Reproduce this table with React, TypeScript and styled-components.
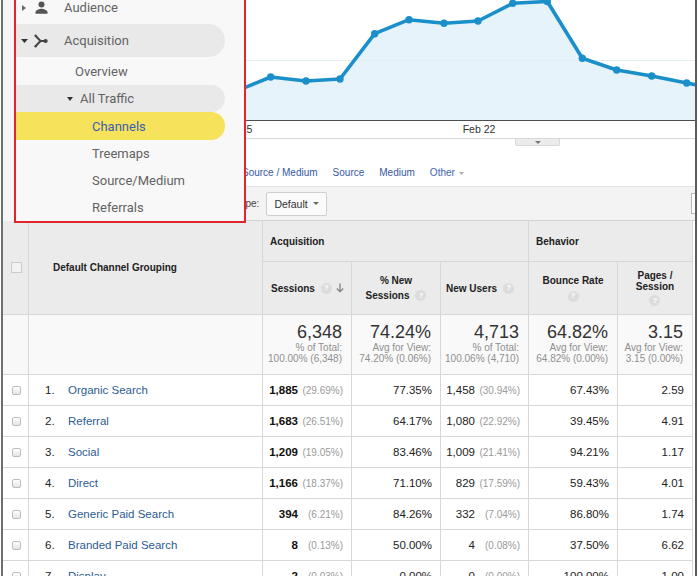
import React from "react";
import styled, { createGlobalStyle } from "styled-components";

const GlobalStyle = createGlobalStyle`
  html, body { margin: 0; padding: 0; background: #ffffff; }
  body { font-family: "Liberation Sans", Arial, sans-serif; }
  #root { width: 698px; height: 576px; overflow: hidden; }
`;

const Frame = styled.div`
  box-sizing: border-box;
  margin-left: 1px;
  width: 696px;
  height: 576px;
  border-left: 2px solid #6f6f6f;
  border-right: 2px solid #5c5c5c;
  display: flex;
  flex-direction: column;
  overflow: hidden;
  background: #fff;
`;

const Top = styled.div`
  display: flex;
  height: 221px;
  flex-shrink: 0;
`;

const SideArea = styled.div`
  width: 243px;
  flex-shrink: 0;
  padding-left: 11px;
  box-sizing: border-box;
  background: #f6f6f6;
`;

const Sidebar = styled.nav`
  position: relative;
  z-index: 2;
  box-sizing: border-box;
  width: 232px;
  height: 223px;
  border: 2px solid #e2252b;
  border-top: none;
  background: #f8f8f8;
  overflow: hidden;
  font-family: Roboto, "Noto Sans", sans-serif;
  font-size: 13px;
  color: #636363;
`;

const NavList = styled.div`
  margin-top: -6px;
  display: flex;
  flex-direction: column;
`;

type Pill = "gray" | "yellow" | undefined;

const NavItem = styled.div<{ $h: number; $indent: number; $pill?: Pill; $active?: boolean; $gap?: number }>`
  display: flex;
  align-items: center;
  height: ${(p) => p.$h}px;
  padding-left: ${(p) => p.$indent}px;
  margin-top: ${(p) => p.$gap ?? 0}px;
  width: 209px;
  box-sizing: border-box;
  border-radius: 0 ${(p) => p.$h / 2}px ${(p) => p.$h / 2}px 0;
  background: ${(p) => (p.$pill === "gray" ? "#e9e9e9" : p.$pill === "yellow" ? "#f6e25b" : "transparent")};
  color: ${(p) => (p.$active ? "#3b5fb2" : "#636363")};
  white-space: nowrap;
`;

const CaretBox = styled.span`
  width: 8px;
  display: flex;
  align-items: center;
  justify-content: center;
  flex-shrink: 0;
`;

const NavIcon = styled.span`
  width: 14px;
  height: 14px;
  margin-left: 6px;
  display: flex;
  align-items: center;
  justify-content: center;
  flex-shrink: 0;
`;

const NavText = styled.span<{ $ml: number }>`
  margin-left: ${(p) => p.$ml}px;
`;

const Main = styled.div`
  flex: 1;
  min-width: 0;
  overflow: hidden;
  display: flex;
  flex-direction: column;
  background: #fff;
`;

const ChartSvg = styled.svg`
  display: block;
  flex-shrink: 0;
`;

const TabRow = styled.div`
  height: 8px;
  flex-shrink: 0;
`;

const Tab = styled.div`
  margin-left: 269px;
  width: 45px;
  height: 7px;
  box-sizing: border-box;
  background: #ececec;
  border: 1px solid #d9d9d9;
  border-top: none;
  border-radius: 0 0 2px 2px;
  display: flex;
  align-items: center;
  justify-content: center;
`;

const Links = styled.div`
  height: 39px;
  box-sizing: border-box;
  padding-top: 20px;
  display: flex;
  align-items: flex-start;
  gap: 15px;
  margin-left: -4px;
  font-size: 10px;
  line-height: 12px;
  color: #3557a6;
  white-space: nowrap;
  flex-shrink: 0;
`;

const LinkText = styled.span`
  display: flex;
  align-items: center;
  height: 12px;
`;

const OtherLink = styled(LinkText)`
  gap: 4px;
  color: #4265b0;
`;

const Toolbar = styled.div`
  height: 35px;
  box-sizing: border-box;
  border-top: 1px solid #e2e2e2;
  border-bottom: 1px solid #d3d3d3;
  background: #f3f3f3;
  display: flex;
  align-items: center;
  font-size: 10px;
  color: #444;
  flex-shrink: 0;
  white-space: nowrap;
`;

const ToolLabel = styled.span`
  margin-left: -32px;
`;

const Select = styled.div`
  margin-left: 7px;
  width: 61px;
  height: 24px;
  box-sizing: border-box;
  border: 1px solid #cfcfcf;
  border-radius: 2px;
  background: #fafafa;
  display: flex;
  align-items: center;
  justify-content: space-between;
  padding: 0 7px 0 7px;
  color: #333;
  font-size: 10.5px;
`;

const EdgeBox = styled.div`
  margin-left: auto;
  width: 4px;
  height: 21px;
  box-sizing: border-box;
  border: 1px solid #b9b9b9;
  border-right: none;
  background: #fff;
`;

const Grid = styled.div`
  display: grid;
  grid-template-columns: 26px 234px 89px 89px 88px 89px 75px;
  grid-template-rows: 41px 53px 60px repeat(7, 31px);
  font-family: "Liberation Sans", Arial, sans-serif;
  color: #222;
  flex-shrink: 0;
`;

const Cell = styled.div`
  box-sizing: border-box;
  border-right: 1px solid #d7d7d7;
  border-bottom: 1px solid #d7d7d7;
  min-width: 0;
  overflow: hidden;
  white-space: nowrap;
`;

const HeadCell = styled(Cell)<{ $cols?: number; $rows?: number; $align?: "left" | "center"; $pl?: number }>`
  grid-column: span ${(p) => p.$cols ?? 1};
  grid-row: span ${(p) => p.$rows ?? 1};
  background: #ebebeb;
  font-size: 10px;
  font-weight: bold;
  color: #222;
  display: flex;
  align-items: center;
  justify-content: ${(p) => (p.$align === "center" ? "center" : "flex-start")};
  padding-left: ${(p) => p.$pl ?? 0}px;
  padding-right: 6px;
`;

const HeadStack = styled.div<{ $gap: number; $lh: number }>`
  display: flex;
  flex-direction: column;
  align-items: center;
  gap: ${(p) => p.$gap}px;
  line-height: ${(p) => p.$lh}px;
  text-align: center;
`;

const HeadLine = styled.div`
  display: flex;
  align-items: center;
  gap: 6px;
`;

const Help = styled.span<{ $ml?: number }>`
  display: inline-flex;
  width: 11px;
  height: 11px;
  margin-left: ${(p) => p.$ml ?? 0}px;
  border-radius: 50%;
  background: #dcdcdc;
  color: #fff;
  font-size: 8px;
  font-weight: bold;
  align-items: center;
  justify-content: center;
  line-height: 1;
  flex-shrink: 0;
`;

const SortArrow = styled.span`
  margin-left: auto;
  display: flex;
  margin-right: 1px;
`;

const HeadCheck = styled.span`
  width: 11px;
  height: 11px;
  box-sizing: border-box;
  border: 1px solid #cbcbcb;
  background: #f3f3f3;
`;

const CheckCell = styled(Cell)<{ $head?: boolean; $total?: boolean }>`
  display: flex;
  align-items: center;
  justify-content: center;
  background: ${(p) => (p.$head ? "#ebebeb" : p.$total ? "#f8f8f8" : "#fff")};
  grid-row: span ${(p) => (p.$head ? 2 : 1)};
  padding-left: 1px;
`;

const RowCheck = styled.span`
  width: 9px;
  height: 9px;
  box-sizing: border-box;
  border: 1px solid #bdbdbd;
  border-radius: 2px;
  background: linear-gradient(#ffffff, #e4e4e4);
`;

const TotalCell = styled(Cell)`
  background: #f9f9f9;
  text-align: right;
  padding: 7px 9px 0 0;
`;

const BigNum = styled.div`
  font-size: 18px;
  line-height: 20px;
  color: #333;
`;

const Note = styled.div`
  font-size: 10px;
  line-height: 11px;
  color: #8f8f8f;
`;

const DataCell = styled(Cell)<{ $left?: boolean }>`
  display: flex;
  align-items: center;
  justify-content: ${(p) => (p.$left ? "flex-start" : "flex-end")};
  padding: ${(p) => (p.$left ? "0 0 0 16px" : "0 8px 0 0")};
  font-size: 11.5px;
  color: #222;
  background: #fff;
`;

const Num = styled.span<{ $bold?: boolean }>`
  font-weight: ${(p) => (p.$bold ? "bold" : "normal")};
  color: ${(p) => (p.$bold ? "#111" : "#222")};
`;

const Pct = styled.span`
  width: 45px;
  text-align: right;
  font-size: 10px;
  color: #9a9a9a;
`;

const Rank = styled.span`
  width: 23px;
  flex-shrink: 0;
`;

const ChannelLink = styled.span`
  color: #2d5b93;
`;

const CaretDown = ({ w = 7, h = 4, color = "#444" }: { w?: number; h?: number; color?: string }) => (
  <svg width={w} height={h} viewBox={`0 0 ${w} ${h}`}>
    <polygon points={`0,0 ${w},0 ${w / 2},${h}`} fill={color} />
  </svg>
);

const CaretRight = () => (
  <svg width="4" height="6" viewBox="0 0 4 6">
    <polygon points="0,0 4,3 0,6" fill="#666" />
  </svg>
);

const PersonIcon = () => (
  <svg width="13" height="13" viewBox="0 0 13 13">
    <circle cx="6.5" cy="3.4" r="3" fill="#555" />
    <path d="M0.5 12.8 V11.3 C0.5 8.9 4.5 7.7 6.5 7.7 C8.5 7.7 12.5 8.9 12.5 11.3 V12.8 Z" fill="#555" />
  </svg>
);

const AcqIcon = () => (
  <svg width="14" height="14" viewBox="0 0 14 14">
    <path d="M1.5 1.8 L6.5 7 L1.5 12.2 M6.5 7 H11" stroke="#444" strokeWidth="2" fill="none" strokeLinejoin="round" />
    <circle cx="11.6" cy="7" r="2.1" fill="#444" />
    <circle cx="1.6" cy="1.8" r="1.2" fill="#444" />
    <circle cx="1.6" cy="12.2" r="1.2" fill="#444" />
  </svg>
);

const Arrow = () => (
  <svg width="8" height="10" viewBox="0 0 8 10">
    <path d="M4 0.5 V8.5 M0.8 5.5 L4 8.8 L7.2 5.5" stroke="#8a8a8a" strokeWidth="1.4" fill="none" />
  </svg>
);

const pts: [number, number][] = [
  [-12, 92], [24.7, 77], [60, 81], [94, 79], [128.7, 33.7], [163, 19.7], [198, 23.3], [232, 21],
  [266.7, 3.3], [301.3, 1.5], [336.3, 58.3], [370.7, 70], [405.7, 76], [440.7, 83], [475, 90],
];

const Chart = () => {
  const line = pts.map(([x, y], i) => `${i ? "L" : "M"}${x},${y}`).join(" ");
  const area = `M-12,120 ${pts.map(([x, y]) => `L${x},${y}`).join(" ")} L475,120 Z`;
  return (
    <ChartSvg width="449" height="139" viewBox="0 0 449 139">
      <rect x="0" y="0" width="449" height="139" fill="#fff" />
      <path d={area} fill="#e6f3fa" />
      <line x1="0" y1="60.5" x2="449" y2="60.5" stroke="#e3edf2" strokeWidth="1" />
      <path d={line} stroke="#1a8fca" strokeWidth="3.6" fill="none" strokeLinejoin="round" />
      {pts.map(([x, y], i) => (
        <circle key={i} cx={x} cy={y} r="3.7" fill="#1a8fca" />
      ))}
      <line x1="0" y1="120.5" x2="449" y2="120.5" stroke="#4d4d4d" strokeWidth="1" />
      <text x="-10" y="133" textAnchor="middle" fontSize="10.5" fill="#333" fontFamily="Liberation Sans, Arial, sans-serif">Feb 15</text>
      <text x="233" y="133" textAnchor="middle" fontSize="10.5" fill="#333" fontFamily="Liberation Sans, Arial, sans-serif">Feb 22</text>
      <line x1="0" y1="138.5" x2="449" y2="138.5" stroke="#d9d9d9" strokeWidth="1" />
    </ChartSvg>
  );
};

type Row = { name: string; s: string; sp: string; ns: string; nu: string; nup: string; br: string; ps: string };

const rows: Row[] = [
  { name: "Organic Search", s: "1,885", sp: "(29.69%)", ns: "77.35%", nu: "1,458", nup: "(30.94%)", br: "67.43%", ps: "2.59" },
  { name: "Referral", s: "1,683", sp: "(26.51%)", ns: "64.17%", nu: "1,080", nup: "(22.92%)", br: "39.45%", ps: "4.91" },
  { name: "Social", s: "1,209", sp: "(19.05%)", ns: "83.46%", nu: "1,009", nup: "(21.41%)", br: "94.21%", ps: "1.17" },
  { name: "Direct", s: "1,166", sp: "(18.37%)", ns: "71.10%", nu: "829", nup: "(17.59%)", br: "59.43%", ps: "4.01" },
  { name: "Generic Paid Search", s: "394", sp: "(6.21%)", ns: "84.26%", nu: "332", nup: "(7.04%)", br: "86.80%", ps: "1.74" },
  { name: "Branded Paid Search", s: "8", sp: "(0.13%)", ns: "50.00%", nu: "4", nup: "(0.08%)", br: "37.50%", ps: "6.62" },
  { name: "Display", s: "2", sp: "(0.03%)", ns: "0.00%", nu: "0", nup: "(0.00%)", br: "100.00%", ps: "1.00" },
];

const totals = [
  { big: "6,348", a: "% of Total:", b: "100.00% (6,348)" },
  { big: "74.24%", a: "Avg for View:", b: "74.20% (0.06%)" },
  { big: "4,713", a: "% of Total:", b: "100.06% (4,710)" },
  { big: "64.82%", a: "Avg for View:", b: "64.82% (0.00%)" },
  { big: "3.15", a: "Avg for View:", b: "3.15 (0.00%)" },
];

export default function App() {
  return (
    <>
      <GlobalStyle />
      <Frame>
        <Top>
          <SideArea>
            <Sidebar>
              <NavList>
                <NavItem $h={27} $indent={4}>
                  <CaretBox><CaretRight /></CaretBox>
                  <NavIcon><PersonIcon /></NavIcon>
                  <NavText $ml={16}>Audience</NavText>
                </NavItem>
                <NavItem $h={33} $indent={4} $pill="gray" $gap={3}>
                  <CaretBox><CaretDown w={7} h={4} color="#333" /></CaretBox>
                  <NavIcon><AcqIcon /></NavIcon>
                  <NavText $ml={16}>Acquisition</NavText>
                </NavItem>
                <NavItem $h={28} $indent={59}>Overview</NavItem>
                <NavItem $h={27} $indent={50} $pill="gray">
                  <CaretBox><CaretDown w={6} h={4} color="#333" /></CaretBox>
                  <NavText $ml={6}>All Traffic</NavText>
                </NavItem>
                <NavItem $h={28} $indent={76} $pill="yellow" $active>Channels</NavItem>
                <NavItem $h={27} $indent={76}>Treemaps</NavItem>
                <NavItem $h={27} $indent={76}>Source/Medium</NavItem>
                <NavItem $h={26} $indent={76}>Referrals</NavItem>
              </NavList>
            </Sidebar>
          </SideArea>
          <Main>
            <Chart />
            <TabRow>
              <Tab><CaretDown w={6} h={3} color="#777" /></Tab>
            </TabRow>
            <Links>
              <LinkText>Source / Medium</LinkText>
              <LinkText>Source</LinkText>
              <LinkText>Medium</LinkText>
              <OtherLink>Other <CaretDown w={5} h={3} color="#b0b0b0" /></OtherLink>
            </Links>
            <Toolbar>
              <ToolLabel>Sort Type:</ToolLabel>
              <Select>
                <span>Default</span>
                <CaretDown w={6} h={3} color="#666" />
              </Select>
              <EdgeBox />
            </Toolbar>
          </Main>
        </Top>

        <Grid>
          <CheckCell $head><HeadCheck /></CheckCell>
          <HeadCell $rows={2} $pl={24}>Default Channel Grouping</HeadCell>
          <HeadCell $cols={3} $pl={7}>Acquisition</HeadCell>
          <HeadCell $cols={2} $pl={7}>Behavior</HeadCell>

          <HeadCell $pl={8}>
            Sessions
            <Help $ml={6}>?</Help>
            <SortArrow><Arrow /></SortArrow>
          </HeadCell>
          <HeadCell $align="center" $pl={6}>
            <HeadStack $gap={3} $lh={12}>
              <div>% New</div>
              <HeadLine>Sessions<Help>?</Help></HeadLine>
            </HeadStack>
          </HeadCell>
          <HeadCell $pl={5}>
            New Users
            <Help $ml={6}>?</Help>
          </HeadCell>
          <HeadCell $align="center" $pl={6}>
            <HeadStack $gap={4} $lh={12}>
              <div>Bounce Rate</div>
              <Help>?</Help>
            </HeadStack>
          </HeadCell>
          <HeadCell $align="center" $pl={6}>
            <HeadStack $gap={3} $lh={11}>
              <div>Pages /<br />Session</div>
              <Help>?</Help>
            </HeadStack>
          </HeadCell>

          <CheckCell $total />
          <TotalCell />
          {totals.map((t) => (
            <TotalCell key={t.big}>
              <BigNum>{t.big}</BigNum>
              <Note>{t.a}</Note>
              <Note>{t.b}</Note>
            </TotalCell>
          ))}

          {rows.map((r, i) => (
            <React.Fragment key={r.name}>
              <CheckCell><RowCheck /></CheckCell>
              <DataCell $left>
                <Rank>{i + 1}.</Rank>
                <ChannelLink>{r.name}</ChannelLink>
              </DataCell>
              <DataCell>
                <Num $bold>{r.s}</Num>
                <Pct>{r.sp}</Pct>
              </DataCell>
              <DataCell>{r.ns}</DataCell>
              <DataCell>
                <Num>{r.nu}</Num>
                <Pct>{r.nup}</Pct>
              </DataCell>
              <DataCell>{r.br}</DataCell>
              <DataCell>{r.ps}</DataCell>
            </React.Fragment>
          ))}
        </Grid>
      </Frame>
    </>
  );
}
